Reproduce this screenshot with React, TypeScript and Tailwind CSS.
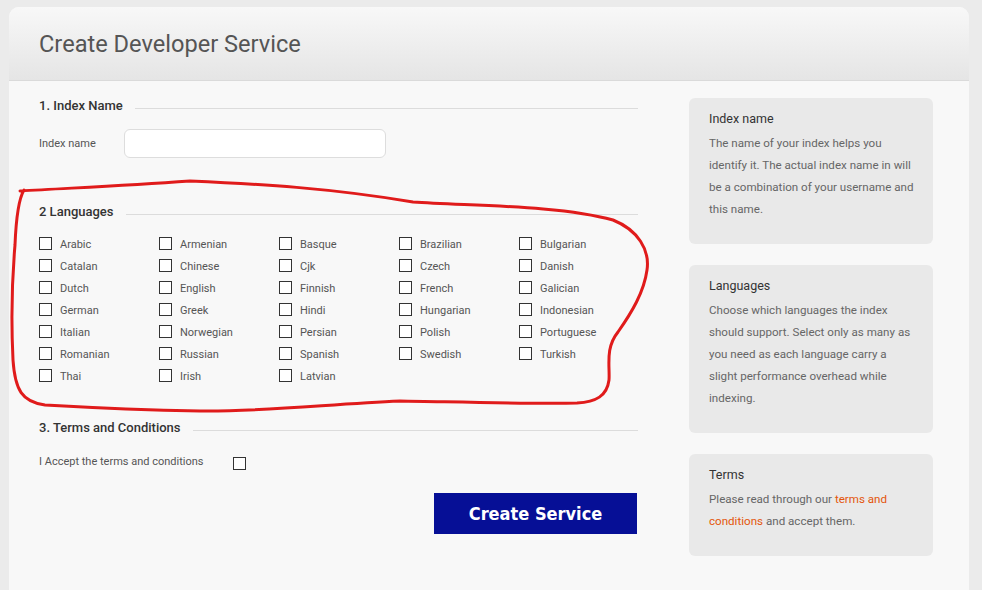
import type { ReactNode } from 'react';

const LANGUAGES = [
  'Arabic', 'Armenian', 'Basque', 'Brazilian', 'Bulgarian',
  'Catalan', 'Chinese', 'Cjk', 'Czech', 'Danish',
  'Dutch', 'English', 'Finnish', 'French', 'Galician',
  'German', 'Greek', 'Hindi', 'Hungarian', 'Indonesian',
  'Italian', 'Norwegian', 'Persian', 'Polish', 'Portuguese',
  'Romanian', 'Russian', 'Spanish', 'Swedish', 'Turkish',
  'Thai', 'Irish', 'Latvian',
];

function SectionHeading({ children }: { children: ReactNode }) {
  return (
    <div className="flex h-[18px] items-center">
      <h2 className="text-[13px] font-medium text-[#333]">{children}</h2>
      <div className="ml-[12px] mt-[4px] h-px flex-1 bg-[#dcdcdc]" />
    </div>
  );
}

function Box() {
  return <input type="checkbox" className="h-[13px] w-[13px] shrink-0 appearance-none border border-[#333] bg-white" />;
}

function HelpCard({ title, children }: { title: string; children: ReactNode }) {
  return (
    <div className="rounded-[6px] bg-[#e9e9e9] pb-[24px] pl-[20px] pr-[19px] pt-[11px]">
      <h3 className="text-[12.5px] leading-[20px] text-[#333]">{title}</h3>
      <p className="mt-[3px] text-[11.6px] leading-[22px] text-[#666]">{children}</p>
    </div>
  );
}

export default function App() {
  return (
    <div className="relative h-[590px] w-[982px] overflow-hidden bg-[#ebebeb] pl-[9px] pt-[7px] font-['Roboto',sans-serif]">
      <div className="h-[600px] w-[960px] rounded-t-[10px] bg-[#f8f8f8]">
        <header className="flex h-[74px] items-center rounded-t-[10px] border-b border-[#dadada] bg-gradient-to-b from-[#f8f8f8] to-[#e5e5e5] pl-[30px]">
          <h1 className="pt-[2px] text-[23.6px] text-[#555]">Create Developer Service</h1>
        </header>

        <div className="flex gap-[51px] pl-[30px] pt-[16px]">
          <form className="w-[599px]">
            <SectionHeading>1. Index Name</SectionHeading>
            <div className="mt-[14px] flex items-center">
              <label className="w-[85px] pt-[1px] text-[11px] text-[#555]">Index name</label>
              <input className="h-[29px] w-[262px] rounded-[6px] border border-[#dddddd] bg-white" />
            </div>

            <div className="mt-[45px]">
              <SectionHeading>2 Languages</SectionHeading>
            </div>
            <div className="mt-[13px] grid grid-cols-[repeat(5,120px)]">
              {LANGUAGES.map((lang) => (
                <label key={lang} className="flex h-[22px] items-center gap-[8px]">
                  <span className="-mt-[3px] flex">
                    <Box />
                  </span>
                  <span className="text-[11px] text-[#555]">{lang}</span>
                </label>
              ))}
            </div>

            <div className="mt-[31px]">
              <SectionHeading>3. Terms and Conditions</SectionHeading>
            </div>
            <div className="mt-[15px] flex h-[20px] items-center">
              <span className="w-[194px] text-[11px] text-[#555]">I Accept the terms and conditions</span>
              <span className="mt-[2px] flex">
                <Box />
              </span>
            </div>

            <div className="mt-[21px] flex justify-end pr-px">
              <button
                type="button"
                className="h-[41px] w-[203px] bg-[#060f96] font-['DejaVu_Sans_Condensed','DejaVu_Sans',sans-serif] text-[18px] font-bold text-white"
              >
                Create Service
              </button>
            </div>
          </form>

          <aside className="flex w-[244px] flex-col gap-[21px] pt-[1px]">
            <HelpCard title="Index name">
              The name of your index helps you identify it. The actual index name in will be a combination of your
              username and this name.
            </HelpCard>
            <HelpCard title="Languages">
              Choose which languages the index should support. Select only as many as you need as each language carry
              a slight performance overhead while indexing.
            </HelpCard>
            <HelpCard title="Terms">
              Please read through our <span className="text-[#e4560c]">terms and conditions</span> and accept them.
            </HelpCard>
          </aside>
        </div>
      </div>

      {/* hand-drawn annotation round the languages block */}
      <svg className="pointer-events-none absolute left-0 top-0" width="982" height="590" viewBox="0 0 982 590">
        <path
          d="M20 191 C 70 188, 120 186, 190 181 C 260 184, 330 188, 413 202 C 470 206, 560 205, 613 220 C 638 230, 650 250, 647 270 C 644 292, 632 312, 618 332 C 605 348, 610 366, 609 380 C 607 396, 596 402, 577 403 C 530 404, 460 402, 400 401 C 330 404, 260 412, 200 411 C 140 410, 80 407, 45 405 C 22 402, 15 390, 13 360 C 11 320, 12 280, 15 245 C 16 220, 18 200, 24 190"
          fill="none"
          stroke="#e01b1b"
          strokeWidth="3"
          strokeLinecap="round"
        />
      </svg>
    </div>
  );
}
